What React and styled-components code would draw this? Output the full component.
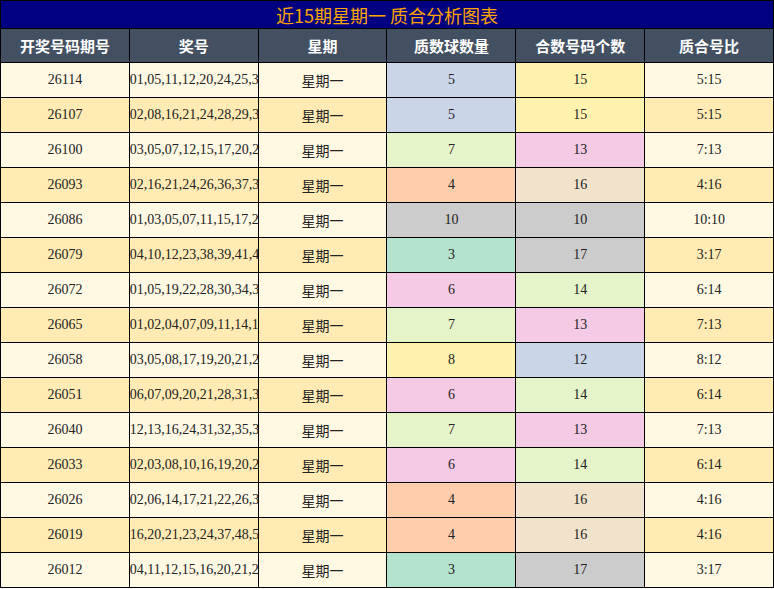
import React from "react";
import styled, { createGlobalStyle } from "styled-components";

const G = createGlobalStyle`
  body { margin:0; background:#fff; font-family:"Liberation Serif","Noto Sans CJK SC",serif; }
`;
const Table = styled.table`
  width:774px; border-collapse:collapse; table-layout:fixed;
  td, th { border:1px solid #000; text-align:center; padding:0; }
`;
const Title = styled.th`
  background:#000080; color:#ffa500; font-weight:normal; font-size:18px; height:27px;
  font-family:"Noto Sans CJK SC",sans-serif; line-height:26px;
`;
const Head = styled.th`
  width:${p => p.$w}px;
  background:#435062; color:#fff; font-weight:bold; font-size:15px; height:33px;
  font-family:"Noto Sans CJK SC",sans-serif;
`;
const Cell = styled.td`
  height:34px; font-size:14px; color:#222; white-space:nowrap; overflow:hidden;
  background:${p => p.$bg};
  font-family:${p => p.$cjk ? '"Noto Sans CJK SC",sans-serif' : '"Liberation Serif",serif'};
`;
const pal = {3:"#b3e2cd",4:"#fdcdac",5:"#cbd5e8",6:"#f4cae4",7:"#e6f5c9",8:"#fff2ae",10:"#cccccc",12:"#cbd5e8",13:"#f4cae4",14:"#e6f5c9",15:"#fff2ae",16:"#f1e2cc",17:"#cccccc"};
const heads = [["开奖号码期号",99],["奖号",363],["星期",57],["质数球数量",84],["合数号码个数",100],["质合号比",71]];
const rows = [
["26114","01,05,11,12,20,24,25,32,33,37,39,45,46,52,53,54,56,57,69,77",5,15],
["26107","02,08,16,21,24,28,29,34,37,39,44,51,53,54,55,57,66,69,75,79",5,15],
["26100","03,05,07,12,15,17,20,29,36,37,38,39,42,48,50,58,64,67,68,77",7,13],
["26093","02,16,21,24,26,36,37,38,40,42,45,48,51,53,57,58,59,62,69,80",4,16],
["26086","01,03,05,07,11,15,17,24,28,29,34,39,45,47,53,57,63,66,72,79",10,10],
["26079","04,10,12,23,38,39,41,44,45,50,51,55,57,60,64,66,68,73,75,76",3,17],
["26072","01,05,19,22,28,30,34,37,38,40,41,44,48,50,51,54,59,74,75,80",6,14],
["26065","01,02,04,07,09,11,14,16,24,32,34,37,48,49,50,52,53,59,63,70",7,13],
["26058","03,05,08,17,19,20,21,27,29,42,47,49,51,53,62,66,69,71,74,80",8,12],
["26051","06,07,09,20,21,28,31,32,33,34,36,39,41,47,56,62,67,70,71,77",6,14],
["26040","12,13,16,24,31,32,35,37,41,43,48,50,51,55,64,66,68,73,76,79",7,13],
["26033","02,03,08,10,16,19,20,21,29,30,33,34,36,48,53,54,55,58,59,76",6,14],
["26026","02,06,14,17,21,22,26,34,35,36,48,51,52,58,60,62,71,73,75,76",4,16],
["26019","16,20,21,23,24,37,48,51,52,53,54,59,60,62,66,68,75,76,77,78",4,16],
["26012","04,11,12,15,16,20,21,26,27,28,30,32,33,41,53,60,62,64,65,76",3,17],
];
export default function App(){
  return (<><G/>
    <Table>
      <thead>
        <tr><Title colSpan={6}>近15期星期一 质合分析图表</Title></tr>
        <tr>{heads.map(([h,w])=><Head key={h} $w={w}>{h}</Head>)}</tr>
      </thead>
      <tbody>
        {rows.map((r,i)=>{const bg=i%2?"#ffebb3":"#fff8e3";return(
          <tr key={r[0]}>
            <Cell $bg={bg}>{r[0]}</Cell>
            <Cell $bg={bg}>{r[1]}</Cell>
            <Cell $bg={bg} $cjk>星期一</Cell>
            <Cell $bg={pal[r[2]]}>{r[2]}</Cell>
            <Cell $bg={pal[r[3]]}>{r[3]}</Cell>
            <Cell $bg={bg}>{r[2]}:{r[3]}</Cell>
          </tr>)})}
      </tbody>
    </Table></>);
}
